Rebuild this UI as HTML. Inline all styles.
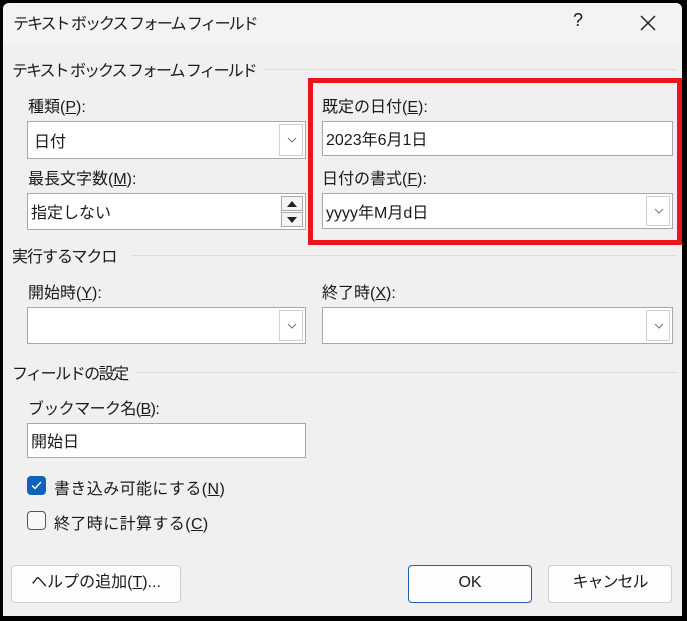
<!DOCTYPE html>
<html><head><meta charset="utf-8"><style>
*{margin:0;padding:0;box-sizing:border-box}
body{width:687px;height:621px;background:#000;position:relative;overflow:hidden;font-family:"Liberation Sans","Noto Sans CJK JP",sans-serif;font-size:16px;color:#1a1a1a}
.dlg{position:absolute;left:3px;top:3px;width:679px;height:613px;background:#f0f0f0;border-radius:6px 6px 0 0}
.title{position:absolute;left:0;top:0;width:679px;height:42px;background:#f3f3f3;border-radius:6px 6px 0 0}
.a{position:absolute;white-space:nowrap}
.box{position:absolute;background:#fff;border:1px solid #a8a8a8}
.dd{position:absolute;right:2px;top:2px;bottom:2px;width:24px;border:1px solid #d0d0d0;background:#fff}
.dd svg{position:absolute;left:7px;top:50%;margin-top:-3px}
.line{position:absolute;height:1px;background:#dcdcdc}
.btn{position:absolute;background:#fdfdfd;border:1px solid #d0d0d0;border-radius:4px;text-align:center;line-height:34px}
u{text-decoration:underline}
</style></head><body>
<div class="dlg">
<div class="title"></div>
<div class="a" style="left:10px;top:7px;letter-spacing:-2px">テキスト ボックス フォーム フィールド</div>
<div class="a" style="left:570px;top:7px;font-size:18px">?</div>
<svg class="a" style="left:637px;top:12px" width="16" height="16"><path d="M1 1L15 15M15 1L1 15" stroke="#222" stroke-width="1.5"/></svg>

<div class="a" style="left:9px;top:54px;letter-spacing:-2px">テキスト ボックス フォーム フィールド</div>
<div class="line" style="left:262px;top:66px;width:412px"></div>

<div style="position:absolute;left:305px;top:75px;width:374px;height:167px;border:5px solid #e8141e"></div>

<div class="a" style="left:25px;top:90px">種類(<u>P</u>):</div>
<div class="box" style="left:24px;top:118px;width:279px;height:38px"><span class="a" style="left:6px;top:6px">日付</span><div class="dd"><svg width="10" height="6"><path d="M1 1L5 5L9 1" stroke="#777" fill="none"/></svg></div></div>
<div class="a" style="left:25px;top:162px">最長文字数(<u>M</u>):</div>
<div class="box" style="left:24px;top:190px;width:279px;height:37px"><span class="a" style="left:3px;top:5px">指定しない</span>
<div style="position:absolute;right:2px;top:2px;width:22px;height:15px;border:1px solid #aaa;background:#f4f4f4"><svg class="a" style="left:5px;top:4px" width="10" height="6"><path d="M0 6L5 0L10 6Z" fill="#222"/></svg></div>
<div style="position:absolute;right:2px;top:18px;width:22px;height:15px;border:1px solid #aaa;background:#f4f4f4"><svg class="a" style="left:5px;top:4px" width="10" height="6"><path d="M0 0L5 6L10 0Z" fill="#222"/></svg></div></div>

<div class="a" style="left:319px;top:90px">既定の日付(<u>E</u>):</div>
<div class="box" style="left:319px;top:118px;width:351px;height:35px"><span class="a" style="left:3px;top:4px">2023年6月1日</span></div>
<div class="a" style="left:319px;top:162px">日付の書式(<u>F</u>):</div>
<div class="box" style="left:319px;top:190px;width:351px;height:36px"><span class="a" style="left:3px;top:5px">yyyy年M月d日</span><div class="dd"><svg width="10" height="6"><path d="M1 1L5 5L9 1" stroke="#777" fill="none"/></svg></div></div>

<div class="a" style="left:9px;top:240px;letter-spacing:-1px">実行するマクロ</div>
<div class="line" style="left:128px;top:252px;width:546px"></div>
<div class="a" style="left:25px;top:276px">開始時(<u>Y</u>):</div>
<div class="box" style="left:24px;top:304px;width:279px;height:37px"><div class="dd"><svg width="10" height="6"><path d="M1 1L5 5L9 1" stroke="#777" fill="none"/></svg></div></div>
<div class="a" style="left:319px;top:276px">終了時(<u>X</u>):</div>
<div class="box" style="left:319px;top:304px;width:351px;height:37px"><div class="dd"><svg width="10" height="6"><path d="M1 1L5 5L9 1" stroke="#777" fill="none"/></svg></div></div>

<div class="a" style="left:9px;top:357px;letter-spacing:-1.5px">フィールドの設定</div>
<div class="line" style="left:133px;top:369px;width:541px"></div>
<div class="a" style="left:25px;top:392px;letter-spacing:-0.6px">ブックマーク名(<u>B</u>):</div>
<div class="box" style="left:24px;top:420px;width:279px;height:35px"><span class="a" style="left:3px;top:4px">開始日</span></div>

<div style="position:absolute;left:24px;top:473px;width:19px;height:19px;background:#0f62b8;border-radius:4px"><svg class="a" style="left:4px;top:5px" width="11" height="9"><path d="M1 4.5L4 7.5L10 1" stroke="#fff" stroke-width="1.3" fill="none"/></svg></div>
<div class="a" style="left:51px;top:472px;letter-spacing:0.4px">書き込み可能にする(<u>N</u>)</div>
<div style="position:absolute;left:24px;top:508px;width:19px;height:19px;border:1px solid #555;border-radius:4px;background:#f8f8f8"></div>
<div class="a" style="left:51px;top:507px;letter-spacing:0.4px">終了時に計算する(<u>C</u>)</div>

<div class="btn" style="left:8px;top:562px;width:170px;height:38px">ヘルプの追加(<u>T</u>)...</div>
<div class="btn" style="left:405px;top:562px;width:124px;height:38px;border-color:#1a62b0">OK</div>
<div class="btn" style="left:545px;top:562px;width:124px;height:38px;letter-spacing:-1px">キャンセル</div>
</div>
</body></html>
